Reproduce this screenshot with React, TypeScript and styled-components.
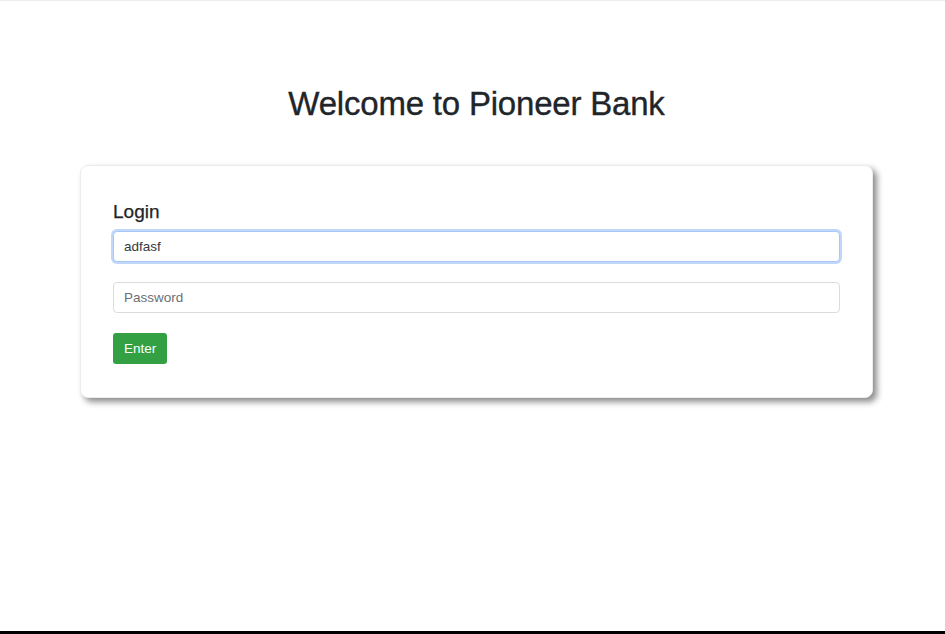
import styled, { createGlobalStyle } from 'styled-components';

const GlobalStyle = createGlobalStyle`
  html, body {
    margin: 0;
    padding: 0;
    background: #fff;
  }
  body {
    font-family: "Liberation Sans", Arial, sans-serif;
    color: #212529;
  }
`;

const Page = styled.div`
  height: 634px;
  box-sizing: border-box;
  border-top: 1px solid #ececec;
  border-bottom: 3px solid #000;
  padding: 0 72px 0 80px;
  display: flex;
  flex-direction: column;
`;

const Title = styled.h2`
  margin: 83px 0 41px;
  text-align: center;
  font-size: 33px;
  font-weight: 500;
  line-height: 40px;
  letter-spacing: -0.2px;
  -webkit-text-stroke: 0.35px #212529;
`;

const Card = styled.div`
  background: #fff;
  border: 1px solid #ececec;
  border-radius: 8px;
  padding: 32px 32px 33px 32px;
  box-shadow: 4px 4px 6px rgba(0, 0, 0, 0.45);
  display: flex;
  flex-direction: column;
  align-items: flex-start;
`;

const Heading = styled.h5`
  margin: 0 0 5px;
  font-size: 19px;
  font-weight: 500;
  line-height: 28px;
  -webkit-text-stroke: 0.25px #212529;
`;

const Field = styled.input<{ $focused?: boolean }>`
  box-sizing: border-box;
  width: 100%;
  height: 31px;
  margin-bottom: 20px;
  padding: 0 10px;
  font-family: inherit;
  font-size: 13.5px;
  color: #343a40;
  background: #fff;
  border-radius: 4px;
  outline: none;
  border: 1px solid ${p => (p.$focused ? '#a9c8f5' : '#dcdcdc')};
  box-shadow: ${p => (p.$focused ? '0 0 0 2px rgba(140, 182, 245, 0.55)' : 'none')};

  &::placeholder {
    color: #6c6f75;
  }
`;

const Button = styled.button`
  height: 31px;
  padding: 0 11px;
  border: none;
  border-radius: 3px;
  background: #33a143;
  color: #fff;
  font-family: inherit;
  font-size: 13.5px;
  cursor: pointer;
`;

export default function App() {
  return (
    <>
      <GlobalStyle />
      <Page>
        <Title>Welcome to Pioneer Bank</Title>
        <Card>
          <Heading>Login</Heading>
          <Field $focused defaultValue="adfasf" />
          <Field type="password" placeholder="Password" />
          <Button>Enter</Button>
        </Card>
      </Page>
    </>
  );
}
